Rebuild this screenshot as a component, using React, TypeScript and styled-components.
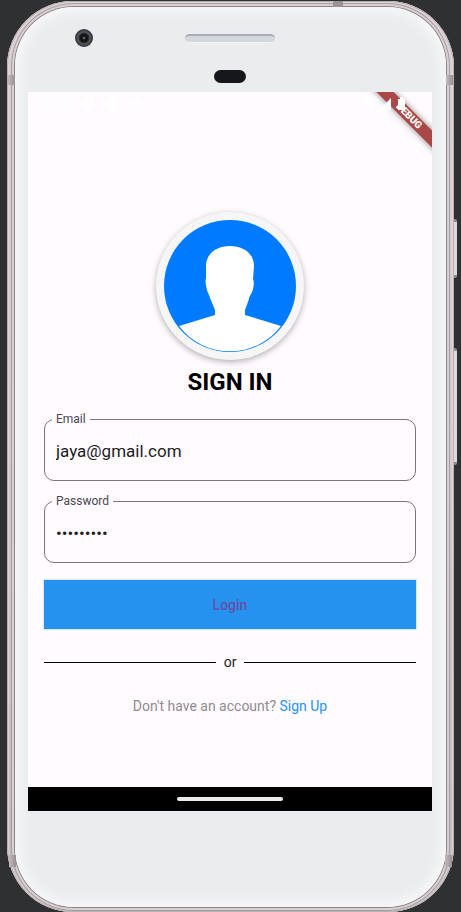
import React, { useState } from "react";
import styled, { createGlobalStyle } from "styled-components";

const GlobalStyle = createGlobalStyle`
  * { box-sizing: border-box; }
  body { margin: 0; background: #2e3032; font-family: Roboto, sans-serif; }
`;

const Stage = styled.main`
  min-height: 100vh;
  padding: 1px 7px 0 7px;
  display: flex;
  flex-direction: column;
`;

const Shell = styled.div`
  position: relative;
  flex: 1;
  display: flex;
  flex-direction: column;
  padding: 6px 8px 5px;
  border-radius: 66px;
  background: linear-gradient(180deg, #d9cfd2, #cfc7ca 50%, #bdb4b7);
  box-shadow: inset 0 0 0 1px #b8afb2, inset 0 0 2px 2px #e4dadd;
`;

const Face = styled.div`
  flex: 1;
  display: flex;
  flex-direction: column;
  padding: 0 14px 0 13px;
  border-radius: 59px;
  background: #eaeced;
  box-shadow: 0 0 0 1px #8c8587, 0 0 0 3px #d8d0d3, 0 0 0 4px #a79fa2, inset 0 0 12px 6px #f6f7f8;
`;

const Forehead = styled.div`
  height: 85px;
  display: grid;
  grid-template-columns: 1fr 90px 1fr;
  grid-template-rows: 20px 20px 16px;
  padding-top: 21px;
  align-items: center;
  justify-items: center;
`;

const Camera = styled.div`
  justify-self: start;
  width: 18px;
  height: 18px;
  margin-left: 47px;
  border-radius: 50%;
  background: radial-gradient(circle, #8a8240 0, #111417 2px, #111417 4px, #555a5f 6px, #2a2d30 9px);
`;

const Speaker = styled.div`
  width: 90px;
  height: 9px;
  border-radius: 5px;
  border-top: 2px solid #a5adb2;
  border-bottom: 1px solid #f5f6f7;
  background: #d3d8dc;
`;

const Sensor = styled.div`
  grid-row: 3;
  grid-column: 2;
  width: 32px;
  height: 13px;
  border-radius: 7px;
  background: #15181b;
`;

const Screen = styled.div`
  position: relative;
  flex: 1;
  display: flex;
  flex-direction: column;
  overflow: hidden;
  background: #fffbff;
`;

const StatusBar = styled.div`
  position: relative;
  z-index: 2;
  height: 24px;
  padding: 0 27px 0 10px;
  display: flex;
  align-items: center;
  gap: 8px;
  color: #ffffff;
  font-size: 14px;
`;

const Spacer = styled.span`
  flex: 1;
`;

const Ribbon = styled.div`
  position: absolute;
  top: 18px;
  right: -25px;
  width: 96px;
  height: 12px;
  transform: rotate(45deg);
  background: #a94846;
  color: #fff;
  font-size: 10px;
  font-weight: 900;
  line-height: 12px;
  text-align: center;
  box-shadow: 0 0 6px rgba(0, 0, 0, 0.5);
`;

const Form = styled.form`
  flex: 1;
  display: flex;
  flex-direction: column;
  padding: 96px 16px 0;
`;

const Avatar = styled.div`
  align-self: center;
  width: 148px;
  height: 148px;
  border-radius: 50%;
  background: #f6f6f6;
  box-shadow: 0 2px 6px rgba(0, 0, 0, 0.3);
`;

const Title = styled.h1`
  margin: 8px 0 16px;
  color: #000;
  font-size: 24px;
  font-weight: 700;
  line-height: 28px;
  text-align: center;
`;

const Field = styled.fieldset`
  min-width: 0;
  height: 69px;
  margin: 0 0 13px;
  padding: 0 11px;
  border: 1px solid #7c757e;
  border-radius: 10px;
`;

const Legend = styled.legend`
  margin-left: -4px;
  padding: 0 4px;
  color: #4b4650;
  font-size: 12px;
  line-height: 14px;
`;

const Input = styled.input`
  display: block;
  width: 100%;
  height: 50px;
  padding: 0;
  border: 0;
  outline: 0;
  background: transparent;
  color: #1d1b1f;
  font-family: Roboto, sans-serif;
  font-size: 17px;
`;

const LoginButton = styled.button`
  height: 49px;
  margin-top: 4px;
  border: 0;
  background: #2692f0;
  box-shadow: 0 0 1px 1px #dbe9f5;
  color: #6750a4;
  font-family: Roboto, sans-serif;
  font-size: 14px;
  font-weight: 500;
  cursor: pointer;
`;

const Divider = styled.div`
  display: flex;
  align-items: center;
  gap: 8px;
  margin-top: 23px;
  color: #1d1b1f;
  font-size: 14px;
  line-height: 20px;
`;

const Rule = styled.span`
  flex: 1;
  height: 1px;
  background: #000;
`;

const Footer = styled.p`
  margin: 24px 0 0;
  color: #8f8c90;
  font-size: 14px;
  line-height: 20px;
  text-align: center;
`;

const SignUp = styled.a`
  color: #2692f0;
  text-decoration: none;
`;

const NavBar = styled.div`
  height: 24px;
  display: flex;
  align-items: center;
  justify-content: center;
  background: #000;
`;

const HomeHandle = styled.button`
  width: 106px;
  height: 4px;
  padding: 0;
  border: 0;
  border-radius: 2px;
  background: #eceaec;
`;

const Chin = styled.div`
  height: 96px;
`;

const SideButton = styled.span<{ $top: number; $height: number }>`
  position: absolute;
  right: -3px;
  top: ${(p) => p.$top}px;
  width: 3px;
  height: ${(p) => p.$height}px;
  border-radius: 0 2px 2px 0;
  border-top: 3px solid #8f8c8d;
  border-bottom: 3px solid #8f8c8d;
  background: #dcdddb;
`;

const Band = styled.span<{ $side: "left" | "right"; $end: "top" | "bottom" }>`
  position: absolute;
  ${(p) => p.$side}: ${(p) => (p.$end === "top" ? 1 : 2)}px;
  ${(p) => p.$end}: ${(p) => (p.$end === "top" ? 74 : 45)}px;
  width: 7px;
  height: ${(p) => (p.$end === "top" ? 10 : 12)}px;
  background: linear-gradient(90deg, #c3babd, #978e91);
`;

const TopBand = styled.span`
  position: absolute;
  top: 0;
  right: 111px;
  width: 10px;
  height: 6px;
  background: #9b9295;
`;

function Portrait() {
  return (
    <svg width="148" height="148" viewBox="0 0 148 148" role="img" aria-label="Profile">
      <circle cx="74" cy="74" r="66" fill="#007bff" />
      <path
        fill="#fff"
        d="M74 34C60 34 50 42 50 54V66C49 68 50 74 51 78C52 82 54 84 54 86L59 98V103L23 114A64 64 0 0 0 125 114L89 103V98L93 87C93 84 96 82 97 77C98 74 98 68 97 67L98 54C98 42 88 34 74 34Z"
      />
    </svg>
  );
}

function NotificationIcons() {
  return (
    <svg width="62" height="14" viewBox="0 0 62 14" fill="currentColor" aria-hidden="true">
      <path d="M1 2L7 0L12 2V7Q11 11 7 13Q2 11 1 7Z" />
      <path d="M28 1H35V13H25V4Z" />
      <circle cx="54" cy="7" r="5" fill="none" stroke="currentColor" strokeWidth="2" />
      <path d="M49 4H59V7H49Z" />
    </svg>
  );
}

function SystemIcons() {
  return (
    <svg width="43" height="14" viewBox="0 0 43 14" fill="currentColor" aria-hidden="true">
      <path d="M0 3Q8-2 16 3L8 12Z" />
      <path d="M29 1V13H17Z" />
      <path d="M36 2H38V0H41V2H43V13H36Z" />
    </svg>
  );
}

export default function App() {
  const [email, setEmail] = useState("jaya@gmail.com");
  const [password, setPassword] = useState("password1");

  return (
    <>
      <GlobalStyle />
      <Stage>
        <Shell>
          <TopBand />
          <Band $side="left" $end="top" />
          <Band $side="right" $end="top" />
          <Band $side="left" $end="bottom" />
          <Band $side="right" $end="bottom" />
          <SideButton $top={218} $height={59} />
          <SideButton $top={347} $height={117} />
          <Face>
            <Forehead>
              <Camera />
              <Speaker />
              <Sensor />
            </Forehead>
            <Screen>
              <StatusBar>
                <span>10:00</span>
                <NotificationIcons />
                <Spacer />
                <SystemIcons />
              </StatusBar>
              <Ribbon>DEBUG</Ribbon>
              <Form onSubmit={(e) => e.preventDefault()}>
                <Avatar>
                  <Portrait />
                </Avatar>
                <Title>SIGN IN</Title>
                <Field>
                  <Legend>
                    <label htmlFor="email">Email</label>
                  </Legend>
                  <Input id="email" type="email" value={email} onChange={(e) => setEmail(e.target.value)} />
                </Field>
                <Field>
                  <Legend>
                    <label htmlFor="password">Password</label>
                  </Legend>
                  <Input
                    id="password"
                    type="password"
                    value={password}
                    onChange={(e) => setPassword(e.target.value)}
                  />
                </Field>
                <LoginButton type="submit">Login</LoginButton>
                <Divider>
                  <Rule />
                  <span>or</span>
                  <Rule />
                </Divider>
                <Footer>
                  Don't have an account? <SignUp href="#signup">Sign Up</SignUp>
                </Footer>
              </Form>
              <NavBar>
                <HomeHandle type="button" aria-label="Home" />
              </NavBar>
            </Screen>
            <Chin />
          </Face>
        </Shell>
      </Stage>
    </>
  );
}
